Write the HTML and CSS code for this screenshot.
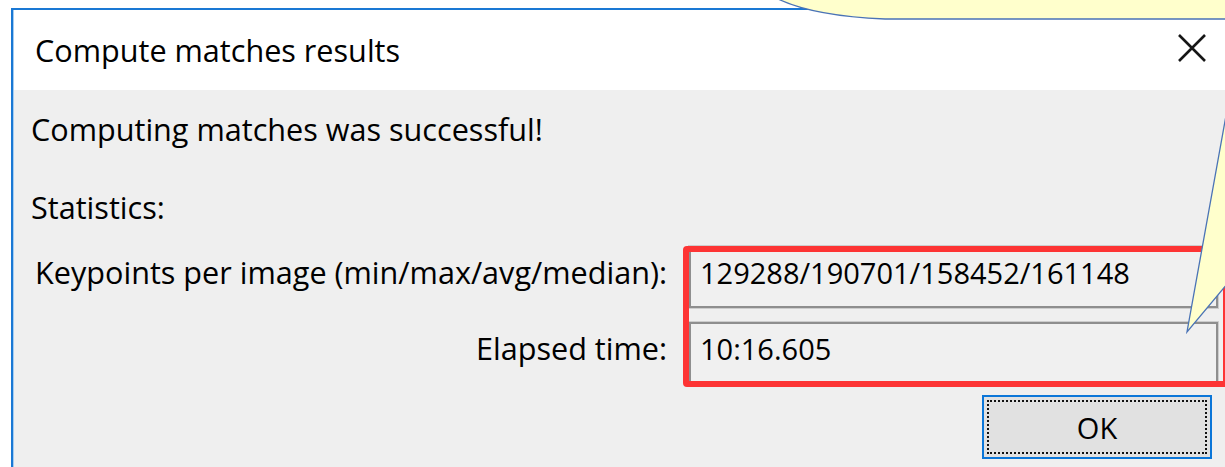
FILE: index.html
```html
<!DOCTYPE html>
<html lang="en">
<head>
<meta charset="utf-8">
<title>Compute matches results</title>
<link rel="stylesheet" href="styles.css">
</head>
<body>
<div class="window">
  <div class="titlebar">
    <span class="title">Compute matches results</span>
    <svg class="close" viewBox="0 0 28 28" aria-hidden="true">
      <path d="M1 1 L27 27 M27 1 L1 27" />
    </svg>
  </div>
  <div class="panel">
    <p class="message">Computing matches was successful!</p>
    <p class="section">Statistics:</p>
    <div class="stats">
      <span class="label">Keypoints per image (min/max/avg/median):</span>
      <div class="field">129288/190701/158452/161148</div>
      <span class="label">Elapsed time:</span>
      <div class="field">10:16.605</div>
    </div>
    <div class="actions">
      <button class="btn" type="button">OK</button>
    </div>
  </div>
</div>

<!-- annotation layer drawn over the dialog -->
<div class="highlight"></div>
<svg class="callout" viewBox="0 0 1225 467" aria-hidden="true">
  <path class="bubble-fill" d="M776 -2 Q812 16 885 19 L1227 19 L1227 -2 Z" />
  <path class="bubble-edge" d="M776 -2 Q812 16 885 19 L1227 19" />
  <path class="bubble-fill" d="M1227 110 L1187 332 L1227 284 Z" />
  <path class="bubble-edge" d="M1227 110 L1187 332 L1227 284" />
</svg>
</body>
</html>
```

FILE: styles.css
```css
html, body {
  margin: 0;
  width: 1225px;
  height: 467px;
  overflow: hidden;
  background: #ffffff;
}

body {
  position: relative;
  font-family: "Open Sans", "Noto Sans", "Liberation Sans", sans-serif;
  font-size: 30.6px;
  color: #000;
}

.window {
  margin: 8px 0 0 11px;
  width: 1211px;
  height: 459px;
  border-top: 2px solid #1a78d4;
  border-left: 2px solid #1a78d4;
  padding-left: 1px;
  background: #a6cdf1;
  display: flex;
  flex-direction: column;
}

.titlebar {
  height: 80px;
  background: #ffffff;
  display: flex;
  align-items: center;
  justify-content: space-between;
  padding: 0 19px 0 21px;
}

.title {
  line-height: 40px;
}

.close {
  width: 28px;
  height: 28px;
  margin-top: -4px;
}

.close path {
  stroke: #161616;
  stroke-width: 2.6;
  fill: none;
}

.panel {
  flex: 1;
  background: #efefef;
  padding: 0 13px 0 17px;
}

.message,
.section {
  margin: 0;
  line-height: 40px;
}

.message {
  margin-top: 19px;
}

.section {
  margin-top: 38px;
}

.stats {
  margin-top: 19px;
  display: grid;
  grid-template-columns: 636px 529px;
  grid-auto-rows: 62px;
  column-gap: 22px;
  row-gap: 14px;
}

.label {
  text-align: right;
  white-space: nowrap;
  line-height: 52px;
}

.field {
  box-sizing: border-box;
  border: 2px solid #8e8e8e;
  box-shadow: 0 0 0 1px #cdcdcd;
  background: #f0f0f0;
  padding-left: 9px;
  font-size: 29px;
  line-height: 50px;
  white-space: nowrap;
}

.actions {
  margin-top: 11px;
  display: flex;
  justify-content: flex-end;
}

.btn {
  box-sizing: border-box;
  width: 230px;
  height: 64px;
  border: 2px solid #0b76d8;
  background: #e1e1e1;
  font-family: inherit;
  font-size: 29px;
  color: #000;
  padding: 0;
  outline: 2px dotted #111;
  outline-offset: -7px;
}

.highlight {
  position: absolute;
  left: 683px;
  top: 246px;
  width: 546px;
  height: 141px;
  box-sizing: border-box;
  border: 6px solid #fd3434;
  border-radius: 4px;
}

.callout {
  position: absolute;
  left: 0;
  top: 0;
  width: 1225px;
  height: 467px;
  pointer-events: none;
}

.bubble-fill {
  fill: #ffffcc;
  stroke: none;
}

.bubble-edge {
  fill: none;
  stroke: #4a73b6;
  stroke-width: 1.3;
}
```
